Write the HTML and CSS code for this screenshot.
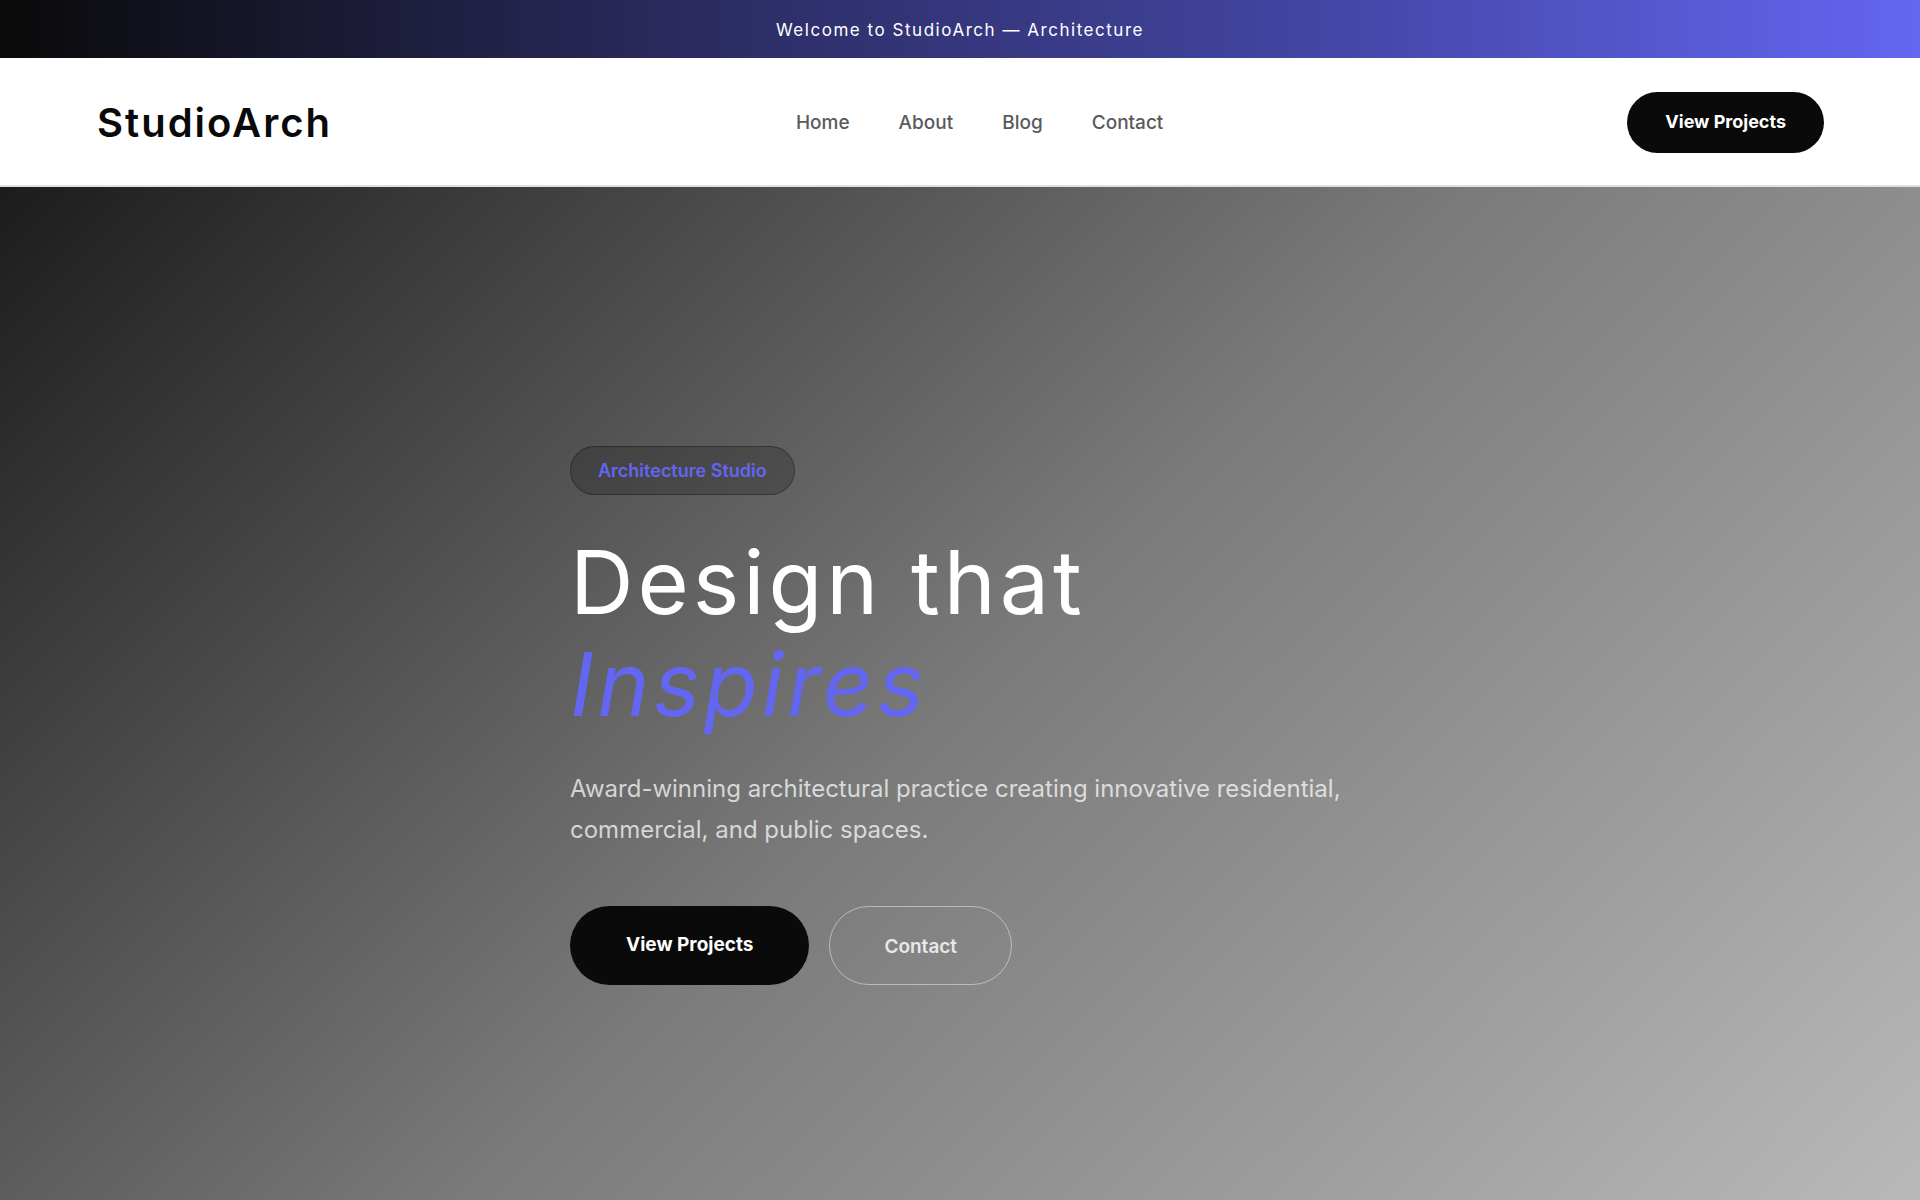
FILE: index.html
```html
<!DOCTYPE html>
<html lang="en">
<head>
<meta charset="utf-8">
<title>StudioArch — Architecture</title>
<link rel="stylesheet" href="styles.css">
</head>
<body>
<div class="page">
  <div class="topbar">Welcome to StudioArch — Architecture</div>
  <header class="header">
    <a class="logo" href="#">StudioArch</a>
    <nav class="nav">
      <a href="#">Home</a>
      <a href="#">About</a>
      <a href="#">Blog</a>
      <a href="#">Contact</a>
    </nav>
    <a class="btn btn-dark btn-header" href="#">View Projects</a>
  </header>
  <section class="hero">
    <div class="hero-inner">
      <span class="badge">Architecture Studio</span>
      <h1 class="title">Design that<br><em>Inspires</em></h1>
      <p class="lead">Award-winning architectural practice creating innovative residential, commercial, and public spaces.</p>
      <div class="actions">
        <a class="btn btn-dark btn-lg" href="#">View Projects</a>
        <a class="btn btn-outline btn-lg" href="#">Contact</a>
      </div>
    </div>
  </section>
</div>
</body>
</html>
```
FILE: styles.css
```css
* { box-sizing: border-box; }
html, body { margin: 0; padding: 0; }
body {
  font-family: "Inter", "Liberation Sans", sans-serif;
  color: #0a0a0a;
  background: #fff;
}
a { text-decoration: none; color: inherit; }

.page {
  min-height: 100vh;
  display: flex;
  flex-direction: column;
}

.topbar {
  height: 58px;
  display: flex;
  align-items: center;
  justify-content: center;
  background: linear-gradient(90deg, #0a0a0a 0%, #2a2a5e 35%, #4447a6 70%, #6366f1 100%);
  color: #fff;
  font-size: 17px;
  letter-spacing: 0.09em;
  padding-top: 1px;
}

.header {
  height: 129px;
  display: flex;
  align-items: center;
  justify-content: space-between;
  padding: 0 96px 0 97px;
  background: #fff;
  border-bottom: 2px solid #e0e0e0;
}

.logo {
  font-size: 40px;
  font-weight: 600;
  letter-spacing: 0.05em;
  color: #0a0a0a;
  margin-top: 2px;
}

.nav {
  display: flex;
  gap: 49px;
  margin-top: 2px;
}
.nav a {
  font-size: 19px;
  font-weight: 500;
  color: #5a5a5a;
}

.btn {
  display: inline-flex;
  align-items: center;
  justify-content: center;
  border-radius: 999px;
  font-weight: 700;
  line-height: 1.2;
}
.btn-dark { background: #0a0a0a; color: #fff; }
.btn-header {
  height: 61px;
  padding: 0 38px;
  font-size: 18px;
  margin-top: 1px;
}

.hero {
  flex: 1;
  background: linear-gradient(135deg, #1c1c1c 0%, #7a7a7a 50%, #b9b9b9 100%);
  padding-top: 259px;
  padding-bottom: 120px;
}
.hero-inner {
  width: 780px;
  margin: 0 auto;
}

.badge {
  display: inline-flex;
  align-items: center;
  height: 49px;
  padding: 0 27px;
  border-radius: 999px;
  background: rgba(0, 0, 0, 0.2);
  border: 1px solid rgba(0, 0, 0, 0.3);
  color: #6366f1;
  font-size: 18px;
  font-weight: 600;
}

.title {
  margin: 36px 0 0;
  font-size: 88px;
  font-weight: 400;
  line-height: 102px;
  letter-spacing: 0.045em;
  color: #fff;
}
.title em {
  color: #6366f1;
  font-style: italic;
}

.lead {
  margin: 33px 0 0;
  font-size: 24px;
  line-height: 41px;
  color: rgba(255, 255, 255, 0.72);
}

.actions {
  display: flex;
  gap: 20px;
  margin-top: 56px;
}
.btn-lg {
  height: 79px;
  padding: 0 56px;
  font-size: 19px;
}
.btn-outline {
  border: 1px solid rgba(255, 255, 255, 0.45);
  color: #e8e8e8;
  font-weight: 600;
  padding: 4px 54px 0;
}
```
